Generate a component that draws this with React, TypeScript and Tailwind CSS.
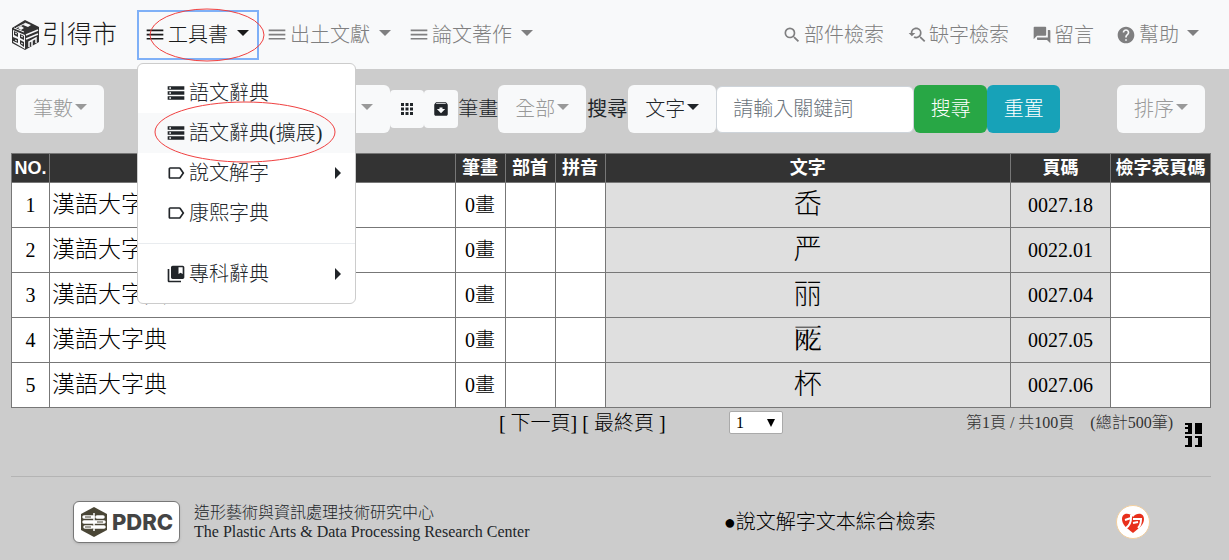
import type { ReactNode } from 'react';
import {
  MdApps,
  MdArchive,
  MdCollectionsBookmark,
  MdDehaze,
  MdForum,
  MdHelp,
  MdLabelOutline,
  MdSearch,
  MdStorage,
  MdYoutubeSearchedFor,
} from 'react-icons/md';

const rows = [
  { no: 1, book: '漢語大字典', strokes: '0畫', char: '岙', page: '0027.18' },
  { no: 2, book: '漢語大字典', strokes: '0畫', char: '严', page: '0022.01' },
  { no: 3, book: '漢語大字典', strokes: '0畫', char: '丽', page: '0027.04' },
  { no: 4, book: '漢語大字典', strokes: '0畫', char: '𠀸', page: '0027.05' },
  { no: 5, book: '漢語大字典', strokes: '0畫', char: '杯', page: '0027.06' },
];

const menuItems = [
  { label: '語文辭典', icon: MdStorage },
  { label: '語文辭典(擴展)', icon: MdStorage, active: true },
  { label: '說文解字', icon: MdLabelOutline, sub: true },
  { label: '康熙字典', icon: MdLabelOutline },
];

function Caret() {
  return (
    <svg viewBox="0 0 12 6" className="w-3 h-1.5 shrink-0 mb-1" fill="currentColor" aria-hidden="true">
      <path d="M0 0h12L6 6z" />
    </svg>
  );
}

function BrandLogo() {
  return (
    <svg viewBox="0 0 27 30" className="w-[27px] h-[30px] shrink-0" aria-hidden="true">
      <path d="M13 0L27 7V22L13 30L0 23V8z" fill="#333" />
      <path d="M4 8L14 3M12 12L2 8" stroke="#f8f9fa" />
      <path d="M6 8l3-2 3 2-3 2zM11 5l3-2 5 2-3 2z" fill="#f8f9fa" />
      <path d="M1 10L13 15V29L1 22z" fill="#f8f9fa" />
      <path d="M2 11l4 2v4l-4-2zM8 14l4 2v4l-4-2zM1 17l5 2v4l-5-2zM8 20l4 2v5l-4-3z" fill="#333" />
      <path d="M3 13l2 1M9 16l2 1M3 20l2 1M9 23l2 1" stroke="#f8f9fa" />
      <path d="M14 15L26 10M14 19L26 14M17 27V22L24 18V23M20 20V26" stroke="#f8f9fa" strokeWidth="1.5" fill="none" />
    </svg>
  );
}

function NavButton({ label, active }: { label: string; active?: boolean }) {
  return (
    <button
      type="button"
      className={`flex items-center h-[50px] pl-2 pr-2.5 whitespace-nowrap ${
        active ? 'text-[#1a1a1a] outline-2 outline-[#7fb0f7] -outline-offset-2' : 'text-[#7f7f80]'
      }`}
    >
      <MdDehaze size={20} className="mr-[3px] shrink-0" />
      <span className="mr-[9px]">{label}</span>
      <Caret />
    </button>
  );
}

function NavLink({ label, children }: { label: string; children: ReactNode }) {
  return (
    <a href="#" className="flex items-center gap-0.5 pl-[11px] pr-3 whitespace-nowrap text-[#7f7f80]">
      {children}
      {label}
    </a>
  );
}

function DropButton({ label, disabled }: { label?: string; disabled?: boolean }) {
  return (
    <button
      type="button"
      disabled={disabled}
      aria-label={label ? undefined : '選單'}
      className="flex items-center justify-end gap-0.5 h-12 w-[88px] pr-[17px] rounded-md bg-[#f8f9fa] text-[#212529] disabled:text-[#999] whitespace-nowrap shrink-0"
    >
      {label}
      <Caret />
    </button>
  );
}

function SubArrow() {
  return (
    <svg viewBox="0 0 6 12" className="ml-auto w-1.5 h-3" fill="currentColor" aria-hidden="true">
      <path d="M0 0v12l6-6z" />
    </svg>
  );
}

function ToolsMenu() {
  return (
    <div className="absolute left-0 top-[53px] z-10 w-[219px] py-[9px] rounded-md border border-[#ccc] bg-white text-[#212529]">
      {menuItems.map(({ label, icon: Icon, active, sub }) => (
        <a
          key={label}
          href="#"
          className={`flex items-center gap-[3px] h-10 pl-7 pr-3.5 whitespace-nowrap ${active ? 'bg-[#f8f9fa]' : ''}`}
        >
          <Icon size={20} />
          <span>{label}</span>
          {sub && <SubArrow />}
        </a>
      ))}
      <div className="my-2.5 border-t border-[#e9ecef]" />
      <a href="#" className="flex items-center gap-[3px] h-10 pl-7 pr-3.5">
        <MdCollectionsBookmark size={20} />
        <span>專科辭典</span>
        <SubArrow />
      </a>
      {/* hand-drawn style highlight around the active entry */}
      <svg viewBox="0 0 182 62" className="absolute left-4 top-[37px] w-[182px] h-[62px] pointer-events-none" aria-hidden="true">
        <ellipse cx="91" cy="31" rx="90" ry="30" fill="none" stroke="#f04040" />
      </svg>
    </div>
  );
}

function Navbar() {
  return (
    <nav className="flex items-center h-[69px] pl-3 pr-5 bg-[#f8f9fa]">
      <a href="#" className="flex items-center gap-[3px] mr-5 text-[25px] text-[#1a1a1a] whitespace-nowrap">
        <BrandLogo />
        引得市
      </a>
      <div className="relative">
        <NavButton label="工具書" active />
        <svg viewBox="0 0 116 54" className="absolute left-3 -top-0.5 w-[116px] h-[54px] pointer-events-none" aria-hidden="true">
          <ellipse cx="58" cy="27" rx="57" ry="26" fill="none" stroke="#f04040" />
        </svg>
        <ToolsMenu />
      </div>
      <NavButton label="出土文獻" />
      <NavButton label="論文著作" />
      <div className="flex items-center ml-auto">
        <NavLink label="部件檢索">
          <MdSearch size={20} />
        </NavLink>
        <NavLink label="缺字檢索">
          <MdYoutubeSearchedFor size={20} />
        </NavLink>
        <NavLink label="留言">
          <MdForum size={20} />
        </NavLink>
        <button type="button" className="flex items-center px-2.5 text-[#7f7f80] whitespace-nowrap">
          <MdHelp size={20} className="mr-[3px]" />
          <span className="mr-2">幫助</span>
          <Caret />
        </button>
      </div>
    </nav>
  );
}

function Toolbar() {
  return (
    <form className="flex items-center pl-4 pr-6 pt-4" onSubmit={(e) => e.preventDefault()}>
      <DropButton label="筆數" disabled />
      <div className="flex-[7]" />
      <div className="flex items-center shrink-0">
        <DropButton disabled />
        <button type="button" aria-label="格狀" className="h-[38px] px-2 rounded bg-[#f8f9fa] text-[#212529]">
          <MdApps size={18} />
        </button>
        <button type="button" aria-label="封存" className="h-[38px] px-2 rounded bg-[#f8f9fa] text-[#212529]">
          <MdArchive size={18} />
        </button>
        <span className="text-[#212529]">筆畫</span>
        <DropButton label="全部" disabled />
        <label htmlFor="keyword" className="mx-px font-normal text-[#212529]">
          搜尋
        </label>
        <DropButton label="文字" />
        <input
          id="keyword"
          type="text"
          placeholder="請輸入關鍵詞"
          className="w-[198px] h-[47px] px-4 rounded-md border border-[#ced4da] bg-white placeholder:text-[#6c757d]"
        />
        <button type="submit" className="h-12 w-[73px] rounded-md bg-[#28a745] text-white">
          搜尋
        </button>
        <button type="reset" className="h-12 w-[73px] rounded-md bg-[#17a2b8] text-white">
          重置
        </button>
      </div>
      <div className="flex-[2]" />
      <DropButton label="排序" disabled />
    </form>
  );
}

function ResultTable() {
  return (
    <table className="mt-5 w-full table-fixed border-collapse bg-white text-center text-black [&_td]:border [&_td]:border-[#777] [&_th]:border [&_th]:border-[#777]">
      <colgroup>
        <col className="w-[38px]" />
        <col />
        <col className="w-[50px]" />
        <col className="w-[50px]" />
        <col className="w-[50px]" />
        <col />
        <col className="w-[100px]" />
        <col className="w-[100px]" />
      </colgroup>
      <thead>
        <tr className="h-[29px] bg-[#333] text-[18px] leading-6 text-white whitespace-nowrap">
          <th className="font-['Liberation_Sans']">NO.</th>
          <th></th>
          <th>筆畫</th>
          <th>部首</th>
          <th>拼音</th>
          <th>文字</th>
          <th>頁碼</th>
          <th>檢字表頁碼</th>
        </tr>
      </thead>
      <tbody>
        {rows.map((row) => (
          <tr key={row.no} className="h-[45px]">
            <td>{row.no}</td>
            <td className="pl-0.5 text-left text-[23px]">{row.book}</td>
            <td>{row.strokes}</td>
            <td></td>
            <td></td>
            <td className="bg-[#dfdfdf] text-[28px]">{row.char}</td>
            <td className="bg-[#dfdfdf]">{row.page}</td>
            <td></td>
          </tr>
        ))}
      </tbody>
    </table>
  );
}

function Pager() {
  return (
    <div className="flex items-start pr-2 text-black whitespace-nowrap">
      <div className="flex-[48]" />
      <div className="w-[230px]">
        [ <a href="#">下一頁</a>] [ <a href="#">最終頁</a> ]
      </div>
      <div className="relative mt-[3px]">
        <select
          aria-label="頁次"
          defaultValue="1"
          className="block appearance-none w-[54px] h-[23px] pl-1.5 border border-[#aaa] rounded-xs bg-white text-[16px] leading-5"
        >
          <option>1</option>
          <option>2</option>
        </select>
        <svg viewBox="0 0 8 8" className="absolute right-2 top-2 size-2 pointer-events-none" aria-hidden="true">
          <path d="M0 0h8L4 8z" />
        </svg>
      </div>
      <div className="flex-[18]" />
      <span className="mr-3 text-[16px] leading-[29px] text-[#333] whitespace-pre">{'第1頁 / 共100頁　(總計500筆)'}</span>
      <svg viewBox="0 0 18 24" className="mt-[15px] w-[18px] h-6" aria-hidden="true">
        <path d="M0 0h7v11H0V9h3V6H0V4h3V2H0zM10 0h7v11h-7zM0 13h7v11H0v-2h3v-7H0zM10 13h7v11h-7v-2h3v-7h-3z" />
      </svg>
    </div>
  );
}

function Footer() {
  return (
    <footer className="mt-[29px] pt-6 pl-[62px] pr-[61px] flex items-center border-t border-[#b4b4b4] text-black whitespace-nowrap">
      <a
        href="#"
        className="flex items-center justify-center gap-1 w-[107px] h-[42px] mr-3.5 border border-[#777] rounded-md bg-white shadow-sm"
      >
        <svg viewBox="0 0 28 32" className="w-7 h-8 shrink-0" aria-hidden="true">
          <path d="M14 1l13 7v16l-13 7L1 24V8z" fill="#4a4636" />
          <path
            d="M4 11h9M17 11h6M4 16h9M15 16h9M5 21h7M15 21h9"
            stroke="#fff"
            strokeWidth="3.5"
            strokeLinecap="round"
          />
          <path d="M14 7v18" stroke="#fff" strokeWidth="1.5" />
          <path d="M5 11h6M17 16h6M5 21h6" stroke="#4a4636" />
        </svg>
        <span className="font-['Inter'] font-extrabold text-[22px] text-[#444]">PDRC</span>
      </a>
      <div className="text-[16px] leading-[19px] text-[#212529]">
        <p>造形藝術與資訊處理技術研究中心</p>
        <p>The Plastic Arts &amp; Data Processing Research Center</p>
      </div>
      <div className="flex-[14]" />
      <a href="#">●說文解字文本綜合檢索</a>
      <div className="flex-[13]" />
      <svg viewBox="0 0 34 34" className="size-[34px]" aria-hidden="true">
        <circle cx="17" cy="17" r="16.5" fill="#fff" stroke="#f3cf9e" />
        <path d="M17 28C11 23 6 20 6 14C6 8 13 7 17 12C21 7 28 8 28 14C28 20 23 23 17 28z" fill="#e8301c" />
        <path d="M9 15l6-2v-3M15 13c0 5-2 8-5 10M17 18l5-1M17 14h8c0 5-1 7-3 9" stroke="#fff" strokeWidth="2" fill="none" />
      </svg>
    </footer>
  );
}

export default function App() {
  return (
    <div className="min-h-screen bg-[#ccc] font-light text-[20px] leading-[30px] font-['Liberation_Serif','Noto_Sans_CJK_TC',serif]">
      <Navbar />
      <Toolbar />
      <main className="pl-[11px] pr-[18px]">
        <ResultTable />
        <Pager />
        <Footer />
      </main>
    </div>
  );
}
